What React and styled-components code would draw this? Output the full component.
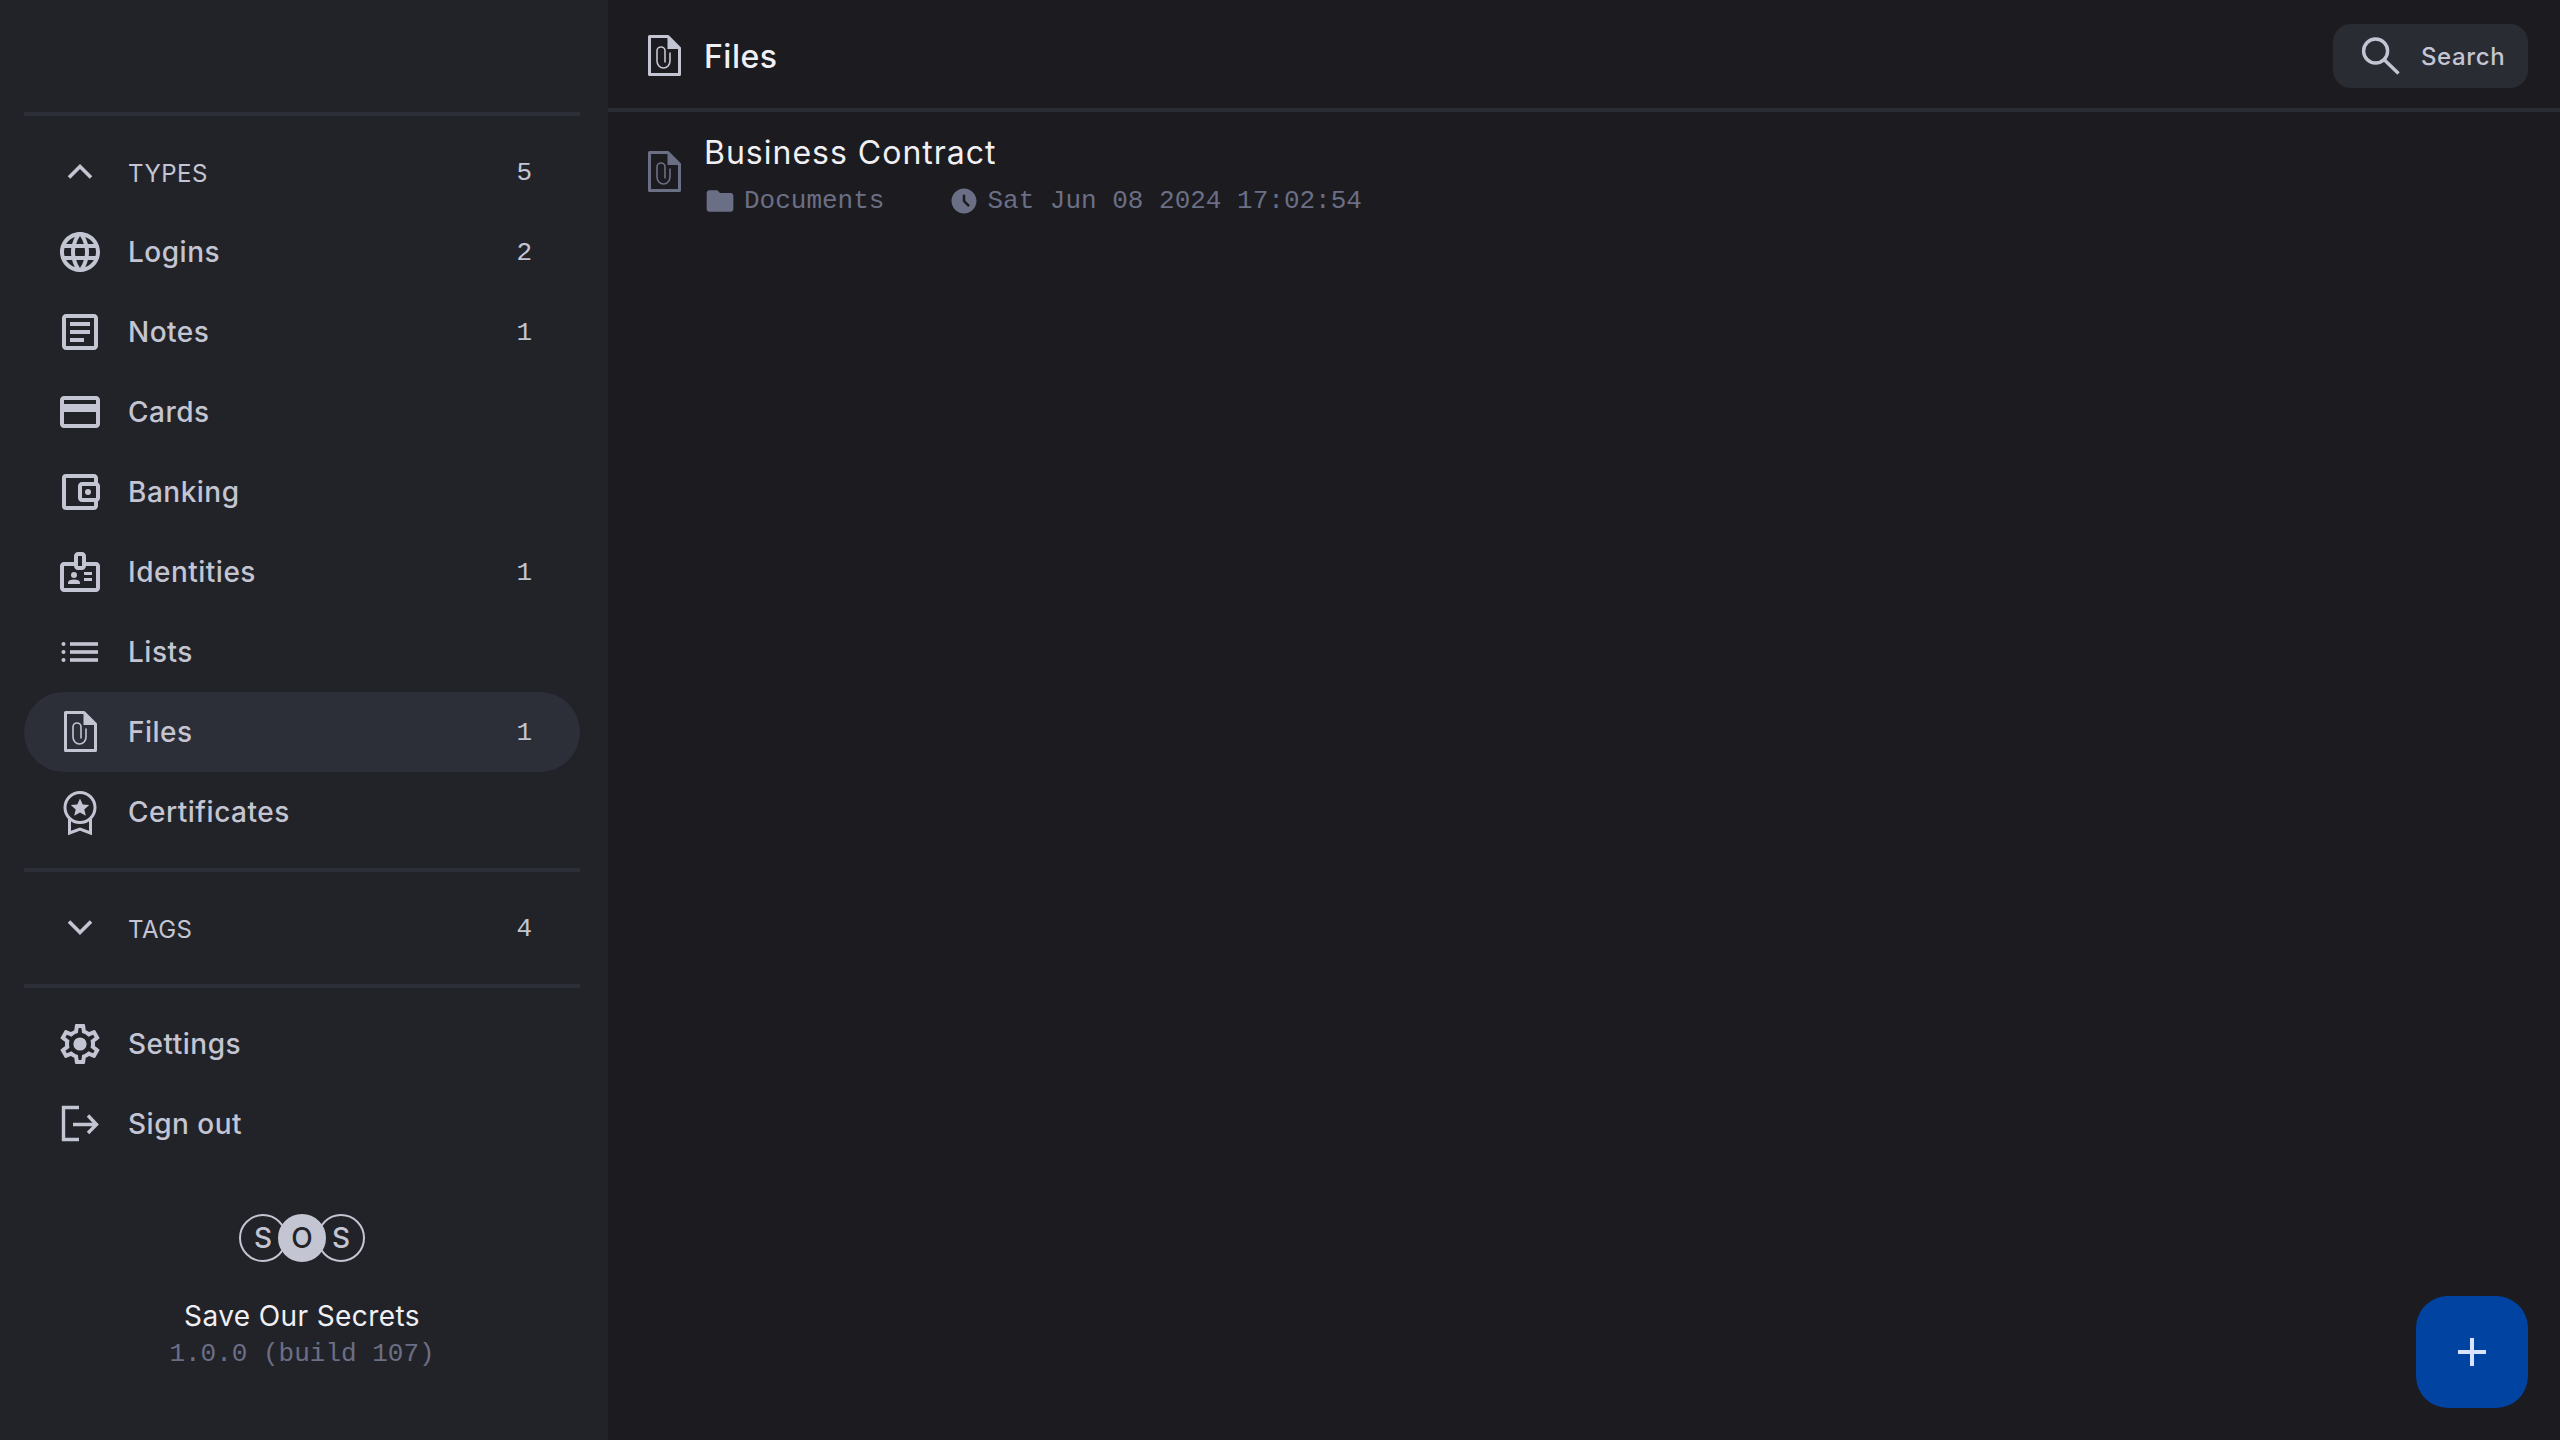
import React from "react";
import styled, { createGlobalStyle } from "styled-components";
import {
  MdOutlineLanguage,
  MdOutlineArticle,
  MdOutlineCreditCard,
  MdOutlineAccountBalanceWallet,
  MdOutlineBadge,
  MdFolder,
  MdAccessTimeFilled,
  MdAdd,
} from "react-icons/md";

const Global = createGlobalStyle`
  html, body { margin: 0; padding: 0; height: 100%; background: #1b1b20; }
  #root { height: 1440px; }
  * { box-sizing: border-box; }
`;

const Shell = styled.div`
  display: flex;
  width: 2560px;
  height: 1440px;
  font-family: Inter, "Noto Sans", sans-serif;
  background: #1b1b20;
  color: #c4c5d2;
`;

const Sidebar = styled.aside`
  width: 608px;
  flex: none;
  background: #222329;
  padding: 112px 28px 0 24px;
  display: flex;
  flex-direction: column;
`;

const Divider = styled.div`
  height: 4px;
  background: #2c2e38;
  flex: none;
`;

const Group = styled.div`
  padding: 16px 0;
  display: flex;
  flex-direction: column;
`;

const Row = styled.div`
  height: 80px;
  display: flex;
  align-items: center;
  padding: 0 48px 0 32px;
  border-radius: 40px;
  background: ${(p) => (p.$active ? "#2c2e38" : "transparent")};
`;

const IconBox = styled.span`
  width: ${(p) => p.$size || 48}px;
  height: ${(p) => p.$size || 48}px;
  flex: none;
  display: flex;
  align-items: center;
  justify-content: center;
  color: ${(p) => p.$color || "#c4c5d2"};
  svg { display: block; width: 100%; height: 100%; }
`;

const Label = styled.span`
  margin-left: 24px;
  flex: 1;
  font-size: 28px;
  letter-spacing: 0.5px;
  font-weight: 500;
  color: #c4c5d2;
`;

const SectionLabel = styled.span`
  margin-left: 24px;
  padding-top: 2px;
  flex: 1;
  font-size: 24px;
  font-weight: 400;
  letter-spacing: 0.5px;
  color: #c4c5d2;
`;

const Count = styled.span`
  padding-top: 1px;
  font-family: "Liberation Mono", monospace;
  font-size: 26px;
  color: #c4c5d2;
`;

const Brand = styled.div`
  margin-top: 34px;
  display: flex;
  flex-direction: column;
  align-items: center;
`;

const Logo = styled.div`
  display: flex;
  height: 48px;
`;

const Ball = styled.span`
  width: 48px;
  height: 48px;
  flex: none;
  margin-left: ${(p) => (p.$first ? 0 : -9)}px;
  border-radius: 50%;
  border: 2px solid #c4c5d2;
  background: ${(p) => (p.$fill ? "#c4c5d2" : "transparent")};
  color: ${(p) => (p.$fill ? "#222329" : "#c4c5d2")};
  display: flex;
  align-items: center;
  justify-content: center;
  font-size: 28px;
  font-weight: 500;
  line-height: 1;
`;

const BrandName = styled.div`
  margin-top: 36px;
  font-size: 28px;
  line-height: 36px;
  font-weight: 400;
  letter-spacing: 0.4px;
  color: #f0f0f4;
`;

const Version = styled.div`
  margin-top: 2px;
  font-family: "Liberation Mono", monospace;
  font-size: 26px;
  line-height: 36px;
  color: #6b6f85;
`;

const Main = styled.main`
  flex: 1;
  display: flex;
  flex-direction: column;
  position: relative;
  min-width: 0;
`;

const Header = styled.header`
  height: 112px;
  flex: none;
  border-bottom: 4px solid #2a2c34;
  display: flex;
  align-items: center;
  padding: 4px 32px 0 32px;
`;

const Title = styled.h1`
  margin: 0 0 0 16px;
  flex: 1;
  font-size: 32px;
  letter-spacing: 0.5px;
  font-weight: 500;
  color: #f0f0f4;
`;

const SearchButton = styled.button`
  width: 195px;
  height: 64px;
  border: 0;
  border-radius: 18px;
  background: #2a2c34;
  color: #c4c5d2;
  display: flex;
  align-items: center;
  padding: 0 0 0 24px;
  font-family: inherit;
  font-size: 24px;
  font-weight: 500;
  letter-spacing: 0.6px;
  gap: 16px;
`;

const Item = styled.div`
  height: 120px;
  display: flex;
  align-items: center;
  padding: 0 32px;
`;

const ItemBody = styled.div`
  margin: 6px 0 0 16px;
  display: flex;
  flex-direction: column;
`;

const ItemTitle = styled.div`
  font-size: 32px;
  line-height: 40px;
  letter-spacing: 1px;
  color: #f0f0f4;
`;

const Meta = styled.div`
  margin-top: 12px;
  display: flex;
  align-items: center;
  gap: 65px;
`;

const MetaPart = styled.span`
  display: flex;
  align-items: center;
  gap: 8px;
  font-family: "Liberation Mono", monospace;
  font-size: 26px;
  line-height: 32px;
  color: #6b6f85;
`;

const Fab = styled.button`
  position: absolute;
  right: 32px;
  bottom: 32px;
  width: 112px;
  height: 112px;
  border: 0;
  border-radius: 32px;
  background: #0043a0;
  color: #dbe4ff;
  display: flex;
  align-items: center;
  justify-content: center;
  padding: 0;
`;

const FileIcon = () => (
  <svg viewBox="0 0 48 48">
    <path d="M9.5 4.5H28L39.5 16V42.5H9.5Z" fill="none" stroke="currentColor" strokeWidth="3" strokeLinejoin="round" />
    <path d="M27.5 3.5L40.5 16.5V17H27.5Z" fill="currentColor" />
    <path d="M30 21V29a6.5 7 0 0 1-13 0V19a4 4 0 0 1 8 0V30" fill="none" stroke="currentColor" strokeWidth="1.6" strokeLinecap="round" />
  </svg>
);

const ListIcon = () => (
  <svg viewBox="0 0 48 48" fill="currentColor">
    <circle cx="7.5" cy="16" r="2" />
    <circle cx="7.5" cy="24" r="2" />
    <circle cx="7.5" cy="32" r="2" />
    <rect x="14" y="14.2" width="28" height="3.6" />
    <rect x="14" y="22.2" width="28" height="3.6" />
    <rect x="14" y="30.2" width="28" height="3.6" />
  </svg>
);

const CertIcon = () => (
  <svg viewBox="0 0 48 48">
    <circle cx="24" cy="19.5" r="15" fill="none" stroke="currentColor" strokeWidth="3" />
    <path d="M24 10.5l2.7 6 6.5.6-4.9 4.3 1.5 6.4-5.8-3.4-5.8 3.4 1.5-6.4-4.9-4.3 6.5-.6Z" fill="currentColor" />
    <path d="M13.5 31V45L24 41 34.5 45V31" fill="none" stroke="currentColor" strokeWidth="3" />
  </svg>
);

const GearIcon = () => (
  <svg viewBox="0 0 24 24" fill="currentColor">
    <path d="M19.43 12.98c.04-.32.07-.64.07-.98 0-.34-.03-.66-.07-.98l2.11-1.65c.19-.15.24-.42.12-.64l-2-3.46a.5.5 0 0 0-.61-.22l-2.49 1c-.52-.4-1.08-.73-1.69-.98l-.38-2.65A.488.488 0 0 0 14 2h-4c-.25 0-.46.18-.49.42l-.38 2.65c-.61.25-1.17.59-1.69.98l-2.49-1a.566.566 0 0 0-.18-.03c-.17 0-.34.09-.43.25l-2 3.46c-.13.22-.07.49.12.64l2.11 1.65c-.04.32-.07.65-.07.98 0 .33.03.66.07.98l-2.11 1.65c-.19.15-.24.42-.12.64l2 3.46a.5.5 0 0 0 .61.22l2.49-1c.52.4 1.08.73 1.69.98l.38 2.65c.03.24.24.42.49.42h4c.25 0 .46-.18.49-.42l.38-2.65c.61-.25 1.17-.59 1.69-.98l2.49 1c.06.02.12.03.18.03.17 0 .34-.09.43-.25l2-3.46c.12-.22.07-.49-.12-.64l-2.11-1.65zm-1.98-1.71c.04.31.05.52.05.73 0 .21-.02.43-.05.73l-.14 1.13.89.7 1.08.84-.7 1.21-1.27-.51-1.04-.42-.9.68c-.43.32-.84.56-1.25.73l-1.06.43-.16 1.13-.2 1.35h-1.4l-.19-1.35-.16-1.13-1.06-.43c-.43-.18-.83-.41-1.23-.71l-.91-.7-1.06.43-1.27.51-.7-1.21 1.08-.84.89-.7-.14-1.13c-.03-.31-.05-.54-.05-.74s.02-.43.05-.73l.14-1.13-.89-.7-1.08-.84.7-1.21 1.27.51 1.04.42.9-.68c.43-.32.84-.56 1.25-.73l1.06-.43.16-1.13.2-1.35h1.39l.19 1.35.16 1.13 1.06.43c.43.18.83.41 1.23.71l.91.7 1.06-.43 1.27-.51.7 1.21-1.07.85-.89.7.14 1.13z" />
    <circle cx="12" cy="12" r="3.3" />
  </svg>
);

const SignOutIcon = () => (
  <svg viewBox="0 0 48 48" fill="none" stroke="currentColor" strokeWidth="3.4">
    <path d="M23 7.5H7.5V39.5H23" />
    <path d="M17 24.5H40M32 15.5L40.5 24.5L32 33" />
  </svg>
);

const ChevronUp = () => (
  <svg viewBox="0 0 48 48" fill="none" stroke="currentColor" strokeWidth="3.6">
    <path d="M13 29.5L24 18.5L35 29.5" />
  </svg>
);

const ChevronDown = () => (
  <svg viewBox="0 0 48 48" fill="none" stroke="currentColor" strokeWidth="3.6">
    <path d="M13 17.5L24 28.5L35 17.5" />
  </svg>
);

const SearchIcon = () => (
  <svg viewBox="0 0 48 48" fill="none" stroke="currentColor" strokeWidth="3.4">
    <circle cx="18.6" cy="19" r="12" />
    <path d="M27.5 28L41.5 41.5" />
  </svg>
);

const types = [
  ["Logins", MdOutlineLanguage, 2],
  ["Notes", MdOutlineArticle, 1],
  ["Cards", MdOutlineCreditCard],
  ["Banking", MdOutlineAccountBalanceWallet],
  ["Identities", MdOutlineBadge, 1],
  ["Lists", ListIcon],
  ["Files", FileIcon, 1, true],
  ["Certificates", CertIcon],
];

export default function App() {
  return (
    <Shell>
      <Global />
      <Sidebar>
        <Divider />
        <Group>
          <Row>
            <IconBox><ChevronUp /></IconBox>
            <SectionLabel>TYPES</SectionLabel>
            <Count>5</Count>
          </Row>
          {types.map(([name, Icon, count, active]) => (
            <Row key={name} $active={active}>
              <IconBox><Icon /></IconBox>
              <Label>{name}</Label>
              {count ? <Count>{count}</Count> : null}
            </Row>
          ))}
        </Group>
        <Divider />
        <Group>
          <Row>
            <IconBox><ChevronDown /></IconBox>
            <SectionLabel>TAGS</SectionLabel>
            <Count>4</Count>
          </Row>
        </Group>
        <Divider />
        <Group>
          <Row>
            <IconBox><GearIcon /></IconBox>
            <Label>Settings</Label>
          </Row>
          <Row>
            <IconBox><SignOutIcon /></IconBox>
            <Label>Sign out</Label>
          </Row>
        </Group>
        <Brand>
          <Logo>
            <Ball $first>S</Ball>
            <Ball $fill>O</Ball>
            <Ball>S</Ball>
          </Logo>
          <BrandName>Save Our Secrets</BrandName>
          <Version>1.0.0 (build 107)</Version>
        </Brand>
      </Sidebar>
      <Main>
        <Header>
          <IconBox><FileIcon /></IconBox>
          <Title>Files</Title>
          <SearchButton>
            <IconBox><SearchIcon /></IconBox>
            Search
          </SearchButton>
        </Header>
        <Item>
          <IconBox $color="#6b6f85"><FileIcon /></IconBox>
          <ItemBody>
            <ItemTitle>Business Contract</ItemTitle>
            <Meta>
              <MetaPart>
                <IconBox $color="#6b6f85" $size={32}><MdFolder /></IconBox>
                Documents
              </MetaPart>
              <MetaPart>
                <IconBox $color="#6b6f85" $size={30}><MdAccessTimeFilled /></IconBox>
                Sat Jun 08 2024 17:02:54
              </MetaPart>
            </Meta>
          </ItemBody>
        </Item>
        <Fab><MdAdd size={48} /></Fab>
      </Main>
    </Shell>
  );
}
